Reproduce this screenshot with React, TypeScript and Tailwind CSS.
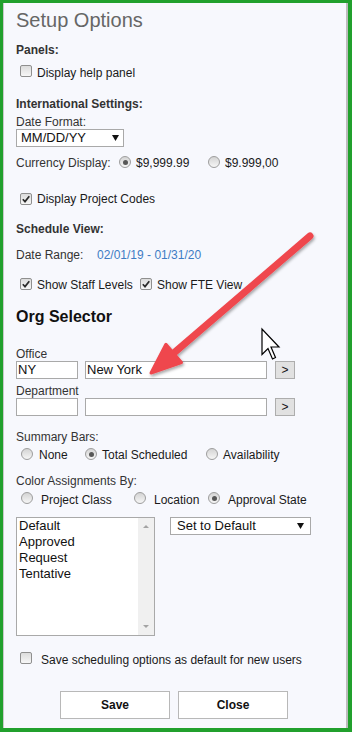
import React from "react";

function Checkbox({ checked = false, className = "" }: { checked?: boolean; className?: string }) {
  return (
    <span
      className={`relative block h-[12px] w-[12px] shrink-0 rounded-[2px] border border-[#8f8f8f] bg-linear-to-b from-[#dcdcdc] to-[#f7f7f7] ${className}`}
    >
      {checked && (
        <svg viewBox="0 0 10 10" className="absolute left-0 top-0 h-[10px] w-[10px]">
          <path d="M1.8 5.2 L4 7.6 L8.3 2.2" fill="none" stroke="#2b2b2b" strokeWidth="1.7" />
        </svg>
      )}
    </span>
  );
}

function Radio({ checked = false, className = "" }: { checked?: boolean; className?: string }) {
  return (
    <span
      className={`flex h-[12px] w-[12px] shrink-0 items-center justify-center rounded-full border border-[#9d9d9d] bg-linear-to-b from-[#d4d4d4] to-[#f6f6f6] ${className}`}
    >
      {checked && <span className="block h-[5px] w-[5px] rounded-full bg-[#575757]" />}
    </span>
  );
}

function Caret({ className = "" }: { className?: string }) {
  return (
    <svg viewBox="0 0 7 6" className={`h-[6px] w-[7px] ${className}`}>
      <path d="M0 0 L7 0 L3.5 6 Z" fill="#111" />
    </svg>
  );
}

export default function App() {
  return (
    <div className="relative h-[732px] w-[352px] overflow-hidden bg-[#21a02d] pb-[4px] pl-[3px] pr-[4px] pt-[3px] font-['Liberation_Sans',Arial,sans-serif]">
      <div className="flex h-full flex-col border-l border-r-2 border-l-[#c9c9c9] border-r-[#bcbcbc] bg-[#f7f8fd] pl-[12px] text-[12px] leading-[14px] text-[#1a1a1a]">
        <div className="mt-[5px] h-[24px] text-[20px] leading-[24px] text-[#666]">Setup Options</div>

        <div className="mt-[11px] h-[14px] font-bold text-[#333]">Panels:</div>
        <div className="mt-[9px] flex h-[14px] items-start">
          <Checkbox className="-mt-[1px] ml-[4px]" />
          <span className="ml-[5px]">Display help panel</span>
        </div>

        <div className="mt-[17px] h-[14px] font-bold text-[#333]">International Settings:</div>
        <div className="mt-[4px] h-[14px] text-[#333]">Date Format:</div>
        <div className="flex h-[18px] w-[108px] items-center border border-[#a9a9a9] bg-white pl-[4px] text-[13px] leading-[16px] text-[#111]">
          <span>MM/DD/YY</span>
          <Caret className="ml-auto mr-[4px]" />
        </div>

        <div className="mt-[9px] flex h-[14px] items-start">
          <span className="w-[103px] text-[#333]">Currency Display:</span>
          <Radio checked />
          <span className="ml-[5px] w-[72px]">$9,999.99</span>
          <Radio />
          <span className="ml-[5px]">$9.999,00</span>
        </div>

        <div className="mt-[22px] flex h-[14px] items-start">
          <Checkbox checked className="ml-[4px] mt-[1px]" />
          <span className="ml-[5px]">Display Project Codes</span>
        </div>

        <div className="mt-[16px] h-[14px] font-bold text-[#333]">Schedule View:</div>
        <div className="mt-[12px] flex h-[14px]">
          <span className="w-[81px] text-[#333]">Date Range:</span>
          <span className="text-[#3e7cc4]">02/01/19 - 01/31/20</span>
        </div>

        <div className="mt-[16px] flex h-[14px] items-start">
          <Checkbox checked className="ml-[4px]" />
          <span className="ml-[5px] w-[103px]">Show Staff Levels</span>
          <Checkbox checked />
          <span className="ml-[5px]">Show FTE View</span>
        </div>

        <div className="mt-[16px] h-[18px] text-[16px] font-bold leading-[18px] text-[#111]">Org Selector</div>

        <div className="mt-[21px] h-[14px] text-[#333]">Office</div>
        <div className="flex h-[18px]">
          <div className="w-[62px] border border-[#a9a9a9] bg-white pl-[1px] text-[13px] leading-[16px] text-[#111]">NY</div>
          <div className="ml-[7px] w-[182px] border border-[#a9a9a9] bg-white pl-[1px] text-[13px] leading-[16px] text-[#111]">New York</div>
          <div className="ml-[8px] flex w-[20px] items-center justify-center border border-[#adadad] bg-[#e1e1e1] text-[12px] text-[#111]">&gt;</div>
        </div>

        <div className="mt-[5px] h-[14px] text-[#333]">Department</div>
        <div className="flex h-[18px]">
          <div className="w-[62px] border border-[#a9a9a9] bg-white" />
          <div className="ml-[7px] w-[182px] border border-[#a9a9a9] bg-white" />
          <div className="ml-[8px] flex w-[20px] items-center justify-center border border-[#adadad] bg-[#e1e1e1] text-[12px] text-[#111]">&gt;</div>
        </div>

        <div className="mt-[14px] h-[14px] text-[#333]">Summary Bars:</div>
        <div className="mt-[4px] flex h-[14px] items-start">
          <Radio className="ml-[5px]" />
          <span className="ml-[6px] w-[46px]">None</span>
          <Radio checked />
          <span className="ml-[5px] w-[104px]">Total Scheduled</span>
          <Radio />
          <span className="ml-[5px]">Availability</span>
        </div>

        <div className="mt-[12px] h-[14px] text-[#333]">Color Assignments By:</div>
        <div className="mt-[5px] flex h-[14px] items-start">
          <Radio className="-mt-[1px] ml-[5px]" />
          <span className="ml-[8px] w-[93px]">Project Class</span>
          <Radio className="-mt-[1px]" />
          <span className="ml-[8px] w-[54px]">Location</span>
          <Radio checked className="-mt-[1px]" />
          <span className="ml-[8px]">Approval State</span>
        </div>

        <div className="mt-[10px] flex items-start">
          <div className="flex h-[119px] w-[139px] border border-[#a9a9a9] bg-white">
            <div className="flex-1 pl-[2px] text-[13px] leading-[16px] text-[#111]">
              <div>Default</div>
              <div>Approved</div>
              <div>Request</div>
              <div>Tentative</div>
            </div>
            <div className="flex w-[16px] flex-col items-center justify-between bg-[#f0f0f0] py-[7px]">
              <svg viewBox="0 0 6 3" className="h-[3px] w-[6px]">
                <path d="M0 3 L3 0 L6 3 Z" fill="#a3a3a3" />
              </svg>
              <svg viewBox="0 0 6 3" className="h-[3px] w-[6px]">
                <path d="M0 0 L6 0 L3 3 Z" fill="#a3a3a3" />
              </svg>
            </div>
          </div>
          <div className="ml-[15px] flex h-[18px] w-[141px] items-center border border-[#a9a9a9] bg-white pl-[6px] text-[13px] leading-[16px] text-[#111]">
            <span>Set to Default</span>
            <Caret className="ml-auto mr-[6px]" />
          </div>
        </div>

        <div className="mt-[17px] flex h-[14px] items-start">
          <Checkbox className="-mt-[1px] ml-[4px]" />
          <span className="ml-[9px]">Save scheduling options as default for new users</span>
        </div>

        <div className="mt-[24px] flex">
          <div className="ml-[44px] flex h-[28px] w-[110px] items-center justify-center border border-[#b8b8b8] bg-white text-[12px] font-bold text-[#111]">Save</div>
          <div className="ml-[8px] flex h-[28px] w-[110px] items-center justify-center border border-[#b8b8b8] bg-white text-[12px] font-bold text-[#111]">Close</div>
        </div>
      </div>

      <svg className="pointer-events-none absolute left-0 top-0 h-[732px] w-[352px]" viewBox="0 0 352 732">
        <defs>
          <filter id="shadow" x="-20%" y="-20%" width="140%" height="140%">
            <feDropShadow dx="1" dy="2" stdDeviation="1.5" floodColor="#000" floodOpacity="0.35" />
          </filter>
        </defs>
        <g filter="url(#shadow)">
          <line x1="310" y1="236" x2="175" y2="352" stroke="#ef474d" strokeWidth="7" strokeLinecap="round" />
          <polygon points="151,373 181.5,362.5 165.9,344.3" fill="#ef474d" stroke="#ef474d" strokeWidth="3" strokeLinejoin="round" />
        </g>
        <path
          d="M262 329 L262 354.5 L268 348.5 L272.5 359 L275.5 357.5 L271 347 L279 347 Z"
          fill="#fff"
          stroke="#000"
          strokeWidth="1.2"
          strokeLinejoin="miter"
        />
      </svg>
    </div>
  );
}
